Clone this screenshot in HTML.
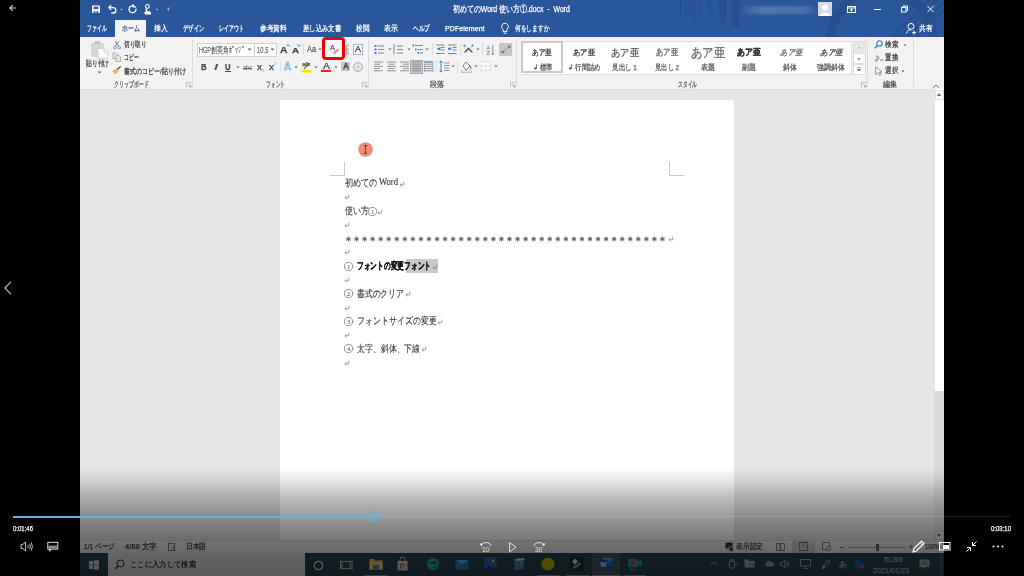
<!DOCTYPE html>
<html><head><meta charset="utf-8">
<style>
*{margin:0;padding:0;box-sizing:border-box}
html,body{width:1024px;height:576px;overflow:hidden;background:#000}
body{position:relative;font-family:"Liberation Sans",sans-serif;color:#444}
.a{position:absolute}
.t{position:absolute;white-space:nowrap;transform-origin:0 50%;-webkit-text-stroke:0.25px currentColor}
svg{overflow:visible}
</style></head>
<body>
<div class="a" style="left:80px;top:0px;width:864px;height:576px;background:#e6e6e6;"></div>
<div class="a" style="left:80px;top:0px;width:864px;height:37px;background:#29579a;"></div>
<div class="a" style="left:80px;top:37px;width:864px;height:52px;background:#f3f3f3;"></div>
<div class="a" style="left:80px;top:89px;width:864px;height:1px;background:#e0e0e0;"></div>
<div class="a" style="left:280px;top:100px;width:454px;height:440px;background:#fff;"></div>
<div class="a" style="left:934px;top:89px;width:10px;height:302px;background:#fff;border-left:1px solid #e9e9e9"></div>
<div class="a" style="left:934px;top:391px;width:10px;height:149px;background:#dadada;"></div>
<svg class="a" style="left:80px;top:0px;overflow:hidden" width="864" height="37" viewBox="0 0 864 37">
<g stroke="#25508d" fill="none">
 <path d="M601 0V15M606 0V18.5M610.5 0V14M614 0V23.5M619 0V17" stroke-width="1.3"/>
 <path d="M627.5 0L632.5 12.5" stroke-width="2.2"/>
 <path d="M639 0H646V24L639 21Z" fill="#25508c" stroke="none"/>
 <path d="M652 0H659V27.5L652 26Z" fill="#25508c" stroke="none"/>
 <circle cx="802" cy="42" r="52" stroke-width="9"/>
 <path d="M812 37L852 -3M820 37L860 -3M828 37L868 -3M836 37L876 -3" stroke-width="2"/>
</g></svg>
<svg class="a" style="left:90px;top:4px;" width="90" height="11" viewBox="0 0 90 11">
<path d="M2 1.5H9.2L10 2.3V8.8H2Z" fill="#fff"/>
<rect x="3.6" y="2.6" width="4.8" height="2.6" fill="#29579a"/>
<rect x="3.8" y="7" width="1.6" height="1.8" fill="#29579a"/><rect x="6.4" y="7" width="1.6" height="1.8" fill="#29579a"/>
<g fill="none" stroke="#fff" stroke-width="1.3">
 <path d="M19.2 3.6H23.2A2.7 2.7 0 0 1 23.2 9H21.2"/>
 <path d="M21.2 1.3L18.8 3.6L21.2 5.9"/>
 <path d="M46 4.6A3.5 3.5 0 1 1 43.6 1.9"/>
 <path d="M43.4 0.2V2.8H46.2"/>
</g>
<circle cx="57.4" cy="2.4" r="1.9" fill="none" stroke="#fff" stroke-width="1.1"/>
<path d="M55.6 4.6H57.2V7.2H59.2Q61 7.2 61 9V10.6H55.2L54 8.4L55.6 8Z" fill="#fff"/>
<g fill="#fff"><path d="M30.4 5H32.6L31.5 6.2Z"/><path d="M66 5H68.2L67.1 6.2Z"/><path d="M77.4 5.6H79.6L78.5 6.8Z"/><rect x="77.4" y="3.8" width="2.2" height="0.7"/></g>
</svg>
<div class="t" id="t0" style="left:453px;top:5.00px;font-size:9px;height:9px;line-height:9px;color:#fff;font-weight:normal;font-family:'Liberation Sans',sans-serif;transform:scaleX(0.7712);">初めてのWord 使い方①.docx&nbsp;&nbsp;-&nbsp;&nbsp;Word</div>
<div class="a" style="left:742px;top:6px;width:74px;height:8px;background:linear-gradient(to right,rgba(255,255,255,0.04),rgba(255,255,255,0.2) 25%,rgba(255,255,255,0.16) 85%,rgba(255,255,255,0.04));filter:blur(1.2px)"></div>
<div class="a" style="left:818px;top:2px;width:14px;height:14px;background:#d9d9d9;"></div>
<svg class="a" style="left:818px;top:2px;" width="14" height="14" viewBox="0 0 14 14"><circle cx="7" cy="5.4" r="2.9" fill="#fff"/><path d="M1.8 14C2.2 9.6 11.8 9.6 12.2 14Z" fill="#fff"/></svg>
<svg class="a" style="left:845px;top:3px;" width="95" height="12" viewBox="0 0 95 12">
<g fill="none" stroke="#fff" stroke-width="1">
 <rect x="2.5" y="3.5" width="8" height="6"/><path d="M2.5 5H10.5M6.5 6V8.5M5 7.3L6.5 6L8 7.3"/>
 <path d="M29 6.5H36"/>
 <rect x="56.5" y="4.5" width="4.5" height="4.5"/><path d="M58 4.5V3H62.5V7.5H61"/>
 <path d="M82.5 3L88.5 9M88.5 3L82.5 9"/>
</g></svg>
<div class="a" style="left:115px;top:20px;width:31px;height:17px;background:#f3f3f3;"></div>
<div class="t" id="t1" style="left:87px;top:24.50px;font-size:8px;height:8px;line-height:8px;color:#fff;font-weight:normal;font-family:'Liberation Sans',sans-serif;transform:scaleX(0.6094);">ファイル</div>
<div class="t" id="t2" style="left:121.5px;top:24.50px;font-size:8px;height:8px;line-height:8px;color:#2b579a;font-weight:normal;font-family:'Liberation Sans',sans-serif;transform:scaleX(0.7292);">ホーム</div>
<div class="t" id="t3" style="left:154px;top:24.50px;font-size:8px;height:8px;line-height:8px;color:#fff;font-weight:normal;font-family:'Liberation Sans',sans-serif;transform:scaleX(0.8438);">挿入</div>
<div class="t" id="t4" style="left:182.5px;top:24.50px;font-size:8px;height:8px;line-height:8px;color:#fff;font-weight:normal;font-family:'Liberation Sans',sans-serif;transform:scaleX(0.6719);">デザイン</div>
<div class="t" id="t5" style="left:218.7px;top:24.50px;font-size:8px;height:8px;line-height:8px;color:#fff;font-weight:normal;font-family:'Liberation Sans',sans-serif;transform:scaleX(0.6400);">レイアウト</div>
<div class="t" id="t6" style="left:260.2px;top:24.50px;font-size:8px;height:8px;line-height:8px;color:#fff;font-weight:normal;font-family:'Liberation Sans',sans-serif;transform:scaleX(0.8375);">参考資料</div>
<div class="t" id="t7" style="left:302.7px;top:24.50px;font-size:8px;height:8px;line-height:8px;color:#fff;font-weight:normal;font-family:'Liberation Sans',sans-serif;transform:scaleX(0.7896);">差し込み文書</div>
<div class="t" id="t8" style="left:356px;top:24.50px;font-size:8px;height:8px;line-height:8px;color:#fff;font-weight:normal;font-family:'Liberation Sans',sans-serif;transform:scaleX(0.8125);">校閲</div>
<div class="t" id="t9" style="left:384.4px;top:24.50px;font-size:8px;height:8px;line-height:8px;color:#fff;font-weight:normal;font-family:'Liberation Sans',sans-serif;transform:scaleX(0.8500);">表示</div>
<div class="t" id="t10" style="left:413.4px;top:24.50px;font-size:8px;height:8px;line-height:8px;color:#fff;font-weight:normal;font-family:'Liberation Sans',sans-serif;transform:scaleX(0.7042);">ヘルプ</div>
<div class="t" id="t11" style="left:445px;top:24.50px;font-size:8px;height:8px;line-height:8px;color:#fff;font-weight:normal;font-family:'Liberation Sans',sans-serif;transform:scaleX(0.8905);">PDFelement</div>
<svg class="a" style="left:500px;top:22px;" width="10" height="13" viewBox="0 0 10 13"><path d="M5 1.2A3.4 3.4 0 0 0 3.1 7.4V9.6H6.9V7.4A3.4 3.4 0 0 0 5 1.2ZM3.6 11.2H6.4" fill="none" stroke="#fff" stroke-width="1"/></svg>
<div class="t" id="t12" style="left:515.4px;top:24.50px;font-size:8px;height:8px;line-height:8px;color:#fff;font-weight:normal;font-family:'Liberation Sans',sans-serif;transform:scaleX(0.7146);">何をしますか</div>
<svg class="a" style="left:905px;top:22px;" width="13" height="13" viewBox="0 0 13 13"><circle cx="6" cy="4.4" r="3" fill="none" stroke="#fff" stroke-width="1"/><path d="M1.4 11.6C2 8.8 3.6 7.6 6 7.6M9 8.6V12.6M7 10.6H11" fill="none" stroke="#fff" stroke-width="1"/></svg>
<div class="t" id="t13" style="left:919px;top:24.50px;font-size:8px;height:8px;line-height:8px;color:#fff;font-weight:normal;font-family:'Liberation Sans',sans-serif;transform:scaleX(0.8438);">共有</div>
<div class="a" style="left:192px;top:39px;width:1px;height:48px;background:#dcdcdc;"></div>
<div class="a" style="left:368px;top:39px;width:1px;height:48px;background:#dcdcdc;"></div>
<div class="a" style="left:516px;top:39px;width:1px;height:48px;background:#dcdcdc;"></div>
<div class="a" style="left:867px;top:39px;width:1px;height:48px;background:#dcdcdc;"></div>
<div class="a" style="left:913px;top:39px;width:1px;height:48px;background:#dcdcdc;"></div>
<div class="t" id="t14" style="left:114px;top:81.20px;font-size:8px;height:8px;line-height:8px;color:#555;font-weight:normal;font-family:'Liberation Sans',sans-serif;transform:scaleX(0.6161);">クリップボード</div>
<div class="t" id="t15" style="left:266px;top:81.20px;font-size:8px;height:8px;line-height:8px;color:#555;font-weight:normal;font-family:'Liberation Sans',sans-serif;transform:scaleX(0.5938);">フォント</div>
<div class="t" id="t16" style="left:430px;top:81.20px;font-size:8px;height:8px;line-height:8px;color:#555;font-weight:normal;font-family:'Liberation Sans',sans-serif;transform:scaleX(0.8750);">段落</div>
<div class="t" id="t17" style="left:678px;top:81.20px;font-size:8px;height:8px;line-height:8px;color:#555;font-weight:normal;font-family:'Liberation Sans',sans-serif;transform:scaleX(0.5938);">スタイル</div>
<div class="t" id="t18" style="left:883px;top:81.20px;font-size:8px;height:8px;line-height:8px;color:#555;font-weight:normal;font-family:'Liberation Sans',sans-serif;transform:scaleX(0.8750);">編集</div>
<svg class="a" style="left:186px;top:82px;" width="6" height="6" viewBox="0 0 6 6"><path d="M0.5 5.5V0.5H5.5" fill="none" stroke="#aaa" stroke-width="0.7"/><path d="M2.2 2.2L5 5M5 3.2V5H3.2" fill="none" stroke="#888" stroke-width="0.7"/></svg>
<svg class="a" style="left:362px;top:82px;" width="6" height="6" viewBox="0 0 6 6"><path d="M0.5 5.5V0.5H5.5" fill="none" stroke="#aaa" stroke-width="0.7"/><path d="M2.2 2.2L5 5M5 3.2V5H3.2" fill="none" stroke="#888" stroke-width="0.7"/></svg>
<svg class="a" style="left:510px;top:82px;" width="6" height="6" viewBox="0 0 6 6"><path d="M0.5 5.5V0.5H5.5" fill="none" stroke="#aaa" stroke-width="0.7"/><path d="M2.2 2.2L5 5M5 3.2V5H3.2" fill="none" stroke="#888" stroke-width="0.7"/></svg>
<svg class="a" style="left:861px;top:82px;" width="6" height="6" viewBox="0 0 6 6"><path d="M0.5 5.5V0.5H5.5" fill="none" stroke="#aaa" stroke-width="0.7"/><path d="M2.2 2.2L5 5M5 3.2V5H3.2" fill="none" stroke="#888" stroke-width="0.7"/></svg>
<svg class="a" style="left:90px;top:40px;" width="19" height="19" viewBox="0 0 19 19">
<rect x="1" y="3" width="13" height="14" rx="1" fill="#d6d6d6"/>
<rect x="4.5" y="1" width="6" height="3.5" rx="1" fill="#c3c3c3"/>
<path d="M8 8.5H14L17.5 12V18.5H8Z" fill="#fdfdfd" stroke="#c8c8c8" stroke-width="0.8"/>
<path d="M14 8.5V12H17.5" fill="none" stroke="#c8c8c8" stroke-width="0.8"/></svg>
<div class="t" id="t19" style="left:86px;top:60.00px;font-size:8px;height:8px;line-height:8px;color:#3c3c3c;font-weight:normal;font-family:'Liberation Sans',sans-serif;transform:scaleX(0.7188);">貼り付け</div>
<svg class="a" style="left:97px;top:71px;" width="5" height="3" viewBox="0 0 5 3"><path d="M0.5 0.5H4.5L2.5 2.5Z" fill="#666"/></svg>
<svg class="a" style="left:112px;top:40px;" width="10" height="10" viewBox="0 0 10 10">
<path d="M3 1L6.8 6.2M7 1L3.2 6.2" stroke="#666" stroke-width="0.8" fill="none"/>
<circle cx="2.8" cy="7.6" r="1.3" fill="none" stroke="#3a7fc9" stroke-width="0.8"/>
<circle cx="7.2" cy="7.6" r="1.3" fill="none" stroke="#3a7fc9" stroke-width="0.8"/></svg>
<div class="t" id="t20" style="left:123.5px;top:41.00px;font-size:8px;height:8px;line-height:8px;color:#3c3c3c;font-weight:normal;font-family:'Liberation Sans',sans-serif;transform:scaleX(0.7031);">切り取り</div>
<svg class="a" style="left:112px;top:52px;" width="10" height="10" viewBox="0 0 10 10">
<path d="M1 1H4.5L5.8 2.3V6.5H1Z" fill="#fff" stroke="#888" stroke-width="0.7"/>
<path d="M1.8 2.8H4M1.8 4.2H4.6" stroke="#999" stroke-width="0.5"/>
<path d="M3.8 3.8H7.3L8.6 5.1V9.4H3.8Z" fill="#fff" stroke="#888" stroke-width="0.7"/>
<path d="M4.6 6H7.6M4.6 7.4H7.6" stroke="#999" stroke-width="0.5"/></svg>
<div class="t" id="t21" style="left:123.5px;top:54.00px;font-size:8px;height:8px;line-height:8px;color:#3c3c3c;font-weight:normal;font-family:'Liberation Sans',sans-serif;transform:scaleX(0.6042);">コピー</div>
<svg class="a" style="left:112px;top:66px;" width="10" height="9" viewBox="0 0 10 9">
<path d="M0.5 5L4 2.5L6.5 5.5L3 8.5Z" fill="#f0b44c"/>
<path d="M5 3.5L8.8 0.5" stroke="#444" stroke-width="1.1"/></svg>
<div class="t" id="t22" style="left:123.5px;top:68.00px;font-size:8px;height:8px;line-height:8px;color:#3c3c3c;font-weight:normal;font-family:'Liberation Sans',sans-serif;transform:scaleX(0.7479);">書式のコピー/貼り付け</div>
<div class="a" style="left:197px;top:42.5px;width:58px;height:14px;background:#fff;border:1px solid #d2d2d2"></div>
<div class="a" style="left:254px;top:42.5px;width:23px;height:14px;background:#fff;border:1px solid #d2d2d2"></div>
<div class="t" id="t23" style="left:199px;top:45.75px;font-size:8.5px;height:8.5px;line-height:8.5px;color:#555;font-weight:normal;font-family:'Liberation Sans',sans-serif;transform:scaleX(0.6532);-webkit-text-stroke:0.1px currentColor">HGP創英角ﾎﾟｯﾌﾟ</div>
<svg class="a" style="left:247px;top:48px;" width="5" height="3" viewBox="0 0 5 3"><path d="M0.5 0.5H4.5L2.5 2.5Z" fill="#555"/></svg>
<div class="t" id="t24" style="left:256.5px;top:45.75px;font-size:8.5px;height:8.5px;line-height:8.5px;color:#555;font-weight:normal;font-family:'Liberation Sans',sans-serif;transform:scaleX(0.6950);-webkit-text-stroke:0.1px currentColor">10.5</div>
<svg class="a" style="left:270px;top:48px;" width="5" height="3" viewBox="0 0 5 3"><path d="M0.5 0.5H4.5L2.5 2.5Z" fill="#555"/></svg>
<div class="t" id="t25" style="left:280px;top:45.25px;font-size:9.5px;height:9.5px;line-height:9.5px;color:#444;font-weight:bold;font-family:'Liberation Sans',sans-serif;transform:scaleX(1.0909);">A</div>
<svg class="a" style="left:286px;top:44px;" width="4" height="3" viewBox="0 0 4 3"><path d="M0.3 2.5L2 0.5L3.7 2.5" fill="none" stroke="#2b79d0" stroke-width="0.9"/></svg>
<div class="t" id="t26" style="left:292px;top:47.00px;font-size:8px;height:8px;line-height:8px;color:#444;font-weight:bold;font-family:'Liberation Sans',sans-serif;transform:scaleX(1.2108);">A</div>
<svg class="a" style="left:297px;top:44px;" width="4" height="3" viewBox="0 0 4 3"><path d="M0.3 0.5L2 2.5L3.7 0.5" fill="none" stroke="#2b79d0" stroke-width="0.9"/></svg>
<div class="a" style="left:303px;top:44px;width:1px;height:11px;background:#dedede;"></div>
<div class="t" id="t27" style="left:307px;top:45.00px;font-size:9px;height:9px;line-height:9px;color:#555;font-weight:normal;font-family:'Liberation Sans',sans-serif;transform:scaleX(0.8170);">Aa</div>
<svg class="a" style="left:318px;top:48px;" width="4" height="3" viewBox="0 0 4 3"><path d="M0.3 0.5H3.7L2 2.3Z" fill="#666"/></svg>
<div class="a" style="left:322px;top:36.5px;width:22.5px;height:23px;background:#fff;border:3.2px solid #f40000;border-radius:4px"></div>
<div class="t" id="t28" style="left:329.5px;top:44.75px;font-size:6.5px;height:6.5px;line-height:6.5px;color:#555;font-weight:normal;font-family:'Liberation Sans',sans-serif;transform:scaleX(1.1511);">A</div>
<svg class="a" style="left:331px;top:47px;" width="8" height="7" viewBox="0 0 8 7"><path d="M2 6L6.5 1.5L8 3L3.5 7.5Z" fill="#e7848f"/></svg>
<svg class="a" style="left:345px;top:44px;" width="4" height="12" viewBox="0 0 4 12"><path d="M3.5 0.5L0.8 3.5" stroke="#555" stroke-width="0.9"/><rect x="0.5" y="4" width="3" height="7" fill="#bdbdbd"/></svg>
<div class="a" style="left:353px;top:44px;width:10px;height:11px;background:#fff;border:1px solid #9fb8d8"></div>
<div class="t" id="t29" style="left:355px;top:45.00px;font-size:9px;height:9px;line-height:9px;color:#333;font-weight:normal;font-family:'Liberation Sans',sans-serif;transform:scaleX(0.9974);">A</div>
<div class="t" id="t30" style="left:201px;top:62.75px;font-size:8.5px;height:8.5px;line-height:8.5px;color:#444;font-weight:bold;font-family:'Liberation Sans',sans-serif;transform:scaleX(0.8957);">B</div>
<div class="t" id="t31" style="left:213.5px;top:62.50px;font-size:9px;height:9px;line-height:9px;color:#555;font-weight:bold;font-family:'Liberation Sans',sans-serif;transform:scaleX(1.5901);font-style:italic;-webkit-text-stroke:0">I</div>
<div class="t" id="t32" style="left:225px;top:62.75px;font-size:8.5px;height:8.5px;line-height:8.5px;color:#444;font-weight:bold;font-family:'Liberation Sans',sans-serif;transform:scaleX(0.8957);">U</div>
<div class="a" style="left:225px;top:71px;width:6px;height:1px;background:#444;"></div>
<svg class="a" style="left:236px;top:66px;" width="4" height="3" viewBox="0 0 4 3"><path d="M0.3 0.5H3.7L2 2.3Z" fill="#666"/></svg>
<div class="t" id="t33" style="left:243px;top:64.00px;font-size:7px;height:7px;line-height:7px;color:#666;font-weight:normal;font-family:'Liberation Sans',sans-serif;transform:scaleX(0.7967);text-decoration:line-through;-webkit-text-stroke:0">abc</div>
<div class="t" id="t34" style="left:257px;top:62.50px;font-size:9px;height:9px;line-height:9px;color:#444;font-weight:normal;font-family:'Liberation Sans',sans-serif;transform:scaleX(1.1111);">x</div>
<div class="t" id="t35" style="left:262px;top:68.50px;font-size:4px;height:4px;line-height:4px;color:#6fa8dc;font-weight:normal;font-family:'Liberation Sans',sans-serif;transform:scaleX(1.1189);-webkit-text-stroke:0">2</div>
<div class="t" id="t36" style="left:269px;top:62.50px;font-size:9px;height:9px;line-height:9px;color:#444;font-weight:normal;font-family:'Liberation Sans',sans-serif;transform:scaleX(1.1111);">x</div>
<div class="t" id="t37" style="left:274px;top:61.50px;font-size:4px;height:4px;line-height:4px;color:#6fa8dc;font-weight:normal;font-family:'Liberation Sans',sans-serif;transform:scaleX(1.1189);-webkit-text-stroke:0">2</div>
<div class="a" style="left:280px;top:61px;width:1px;height:12px;background:#dedede;"></div>
<div class="t" id="t38" style="left:284px;top:62.00px;font-size:10px;height:10px;line-height:10px;color:#9cc3ea;font-weight:bold;font-family:'Liberation Sans',sans-serif;transform:scaleX(0.9676);-webkit-text-stroke:0.6px #5b9bd5;color:#dbe9f7">A</div>
<svg class="a" style="left:294px;top:66px;" width="4" height="3" viewBox="0 0 4 3"><path d="M0.3 0.5H3.7L2 2.3Z" fill="#666"/></svg>
<div class="t" id="t39" style="left:302px;top:61.00px;font-size:6px;height:6px;line-height:6px;color:#555;font-weight:normal;font-family:'Liberation Sans',sans-serif;transform:scaleX(1.1963);">ab</div>
<svg class="a" style="left:301px;top:62px;" width="11" height="11" viewBox="0 0 11 11"><path d="M3 7L8.5 1" stroke="#444" stroke-width="1.1"/><rect x="0.5" y="8" width="10" height="2.5" fill="#f5e400"/></svg>
<svg class="a" style="left:314px;top:66px;" width="4" height="3" viewBox="0 0 4 3"><path d="M0.3 0.5H3.7L2 2.3Z" fill="#666"/></svg>
<div class="t" id="t40" style="left:322.5px;top:61.75px;font-size:8.5px;height:8.5px;line-height:8.5px;color:#444;font-weight:normal;font-family:'Liberation Sans',sans-serif;transform:scaleX(1.2342);">A</div>
<div class="a" style="left:321px;top:70px;width:10px;height:2.2px;background:#e8230f;"></div>
<svg class="a" style="left:334px;top:66px;" width="4" height="3" viewBox="0 0 4 3"><path d="M0.3 0.5H3.7L2 2.3Z" fill="#666"/></svg>
<div class="a" style="left:341px;top:62px;width:9px;height:9px;background:#c6c6c6;"></div>
<div class="t" id="t41" style="left:342.5px;top:62.25px;font-size:8.5px;height:8.5px;line-height:8.5px;color:#444;font-weight:bold;font-family:'Liberation Sans',sans-serif;transform:scaleX(0.9771);">A</div>
<svg class="a" style="left:353px;top:61.5px;" width="10" height="10" viewBox="0 0 10 10"><circle cx="5" cy="5" r="4.3" fill="none" stroke="#888" stroke-width="0.8"/><path d="M5 2.5V7.5M2.5 5H7.5" stroke="#aaa" stroke-width="0.7"/></svg>
<svg class="a" style="left:374px;top:44px;" width="11" height="11" viewBox="0 0 11 11"><g fill="#3a7fc9"><rect x="0.5" y="1" width="2" height="2"/><rect x="0.5" y="4.5" width="2" height="2"/><rect x="0.5" y="8" width="2" height="2"/></g><g stroke="#777" stroke-width="0.9"><path d="M4 2H10M4 5.5H10M4 9H10"/></g></svg>
<svg class="a" style="left:388px;top:48px;" width="4" height="3" viewBox="0 0 4 3"><path d="M0.3 0.5H3.7L2 2.3Z" fill="#666"/></svg>
<svg class="a" style="left:393px;top:44px;" width="11" height="11" viewBox="0 0 11 11"><path d="M1 0.5V10.5" stroke="#3a7fc9" stroke-width="0.9"/><g stroke="#777" stroke-width="0.9"><path d="M4 2H10M4 5.5H10M4 9H10"/></g></svg>
<svg class="a" style="left:407px;top:48px;" width="4" height="3" viewBox="0 0 4 3"><path d="M0.3 0.5H3.7L2 2.3Z" fill="#666"/></svg>
<svg class="a" style="left:412px;top:44px;" width="12" height="11" viewBox="0 0 12 11"><g fill="#3a7fc9"><rect x="0.5" y="0.5" width="1.5" height="2"/><rect x="3" y="4.5" width="1.5" height="2"/><rect x="5.5" y="8" width="1.5" height="2"/></g><g stroke="#777" stroke-width="0.9"><path d="M3 1.5H11M5.5 5.5H11M8 9H11"/></g></svg>
<svg class="a" style="left:425px;top:48px;" width="4" height="3" viewBox="0 0 4 3"><path d="M0.3 0.5H3.7L2 2.3Z" fill="#666"/></svg>
<div class="a" style="left:432px;top:43px;width:1px;height:12px;background:#dedede;"></div>
<svg class="a" style="left:436px;top:44px;" width="9" height="11" viewBox="0 0 9 11"><g stroke="#777" stroke-width="0.9"><path d="M0 1H8.5M4.5 3.5H8.5M4.5 6H8.5M0 9.5H8.5"/></g><path d="M3.5 3L0.8 4.8L3.5 6.6Z" fill="#3a7fc9"/><rect x="2" y="4" width="2.5" height="1.6" fill="#3a7fc9"/></svg>
<svg class="a" style="left:448px;top:44px;" width="9" height="11" viewBox="0 0 9 11"><g stroke="#777" stroke-width="0.9"><path d="M0 1H8.5M4.5 3.5H8.5M4.5 6H8.5M0 9.5H8.5"/></g><path d="M1 3L3.7 4.8L1 6.6Z" fill="#3a7fc9"/><rect x="0" y="4" width="2.5" height="1.6" fill="#3a7fc9"/></svg>
<div class="a" style="left:460px;top:43px;width:1px;height:12px;background:#dedede;"></div>
<svg class="a" style="left:463px;top:44px;" width="11" height="10" viewBox="0 0 11 10"><path d="M0.8 8.6L5.5 3.2L10.2 8.6H8.2L5.5 5.6L2.8 8.6Z" fill="#555"/><path d="M1.2 1.5L3 3.2M9.8 1.5L8 3.2" stroke="#5b9bd5" stroke-width="1"/><g fill="#3a7fc9"><circle cx="1.4" cy="1.6" r="1"/><circle cx="9.6" cy="1.6" r="1"/></g></svg>
<svg class="a" style="left:476px;top:48px;" width="4" height="3" viewBox="0 0 4 3"><path d="M0.3 0.5H3.7L2 2.3Z" fill="#666"/></svg>
<div class="a" style="left:482px;top:43px;width:1px;height:12px;background:#dedede;"></div>
<svg class="a" style="left:486px;top:44px;" width="9" height="12" viewBox="0 0 9 12"><text x="0.3" y="5.5" font-size="5.5" font-family="Liberation Sans" font-weight="bold" fill="#5b9bd5">A</text><text x="0.5" y="10.8" font-size="5.5" font-family="Liberation Sans" font-weight="bold" fill="#9b6fc0">Z</text><path d="M6.8 1V10.5M5.5 9.2L6.8 10.8L8.1 9.2" fill="none" stroke="#666" stroke-width="0.7"/></svg>
<div class="a" style="left:499px;top:43px;width:13px;height:13px;background:#c6c6c6;"></div>
<svg class="a" style="left:501px;top:45px;" width="10" height="9" viewBox="0 0 10 9"><path d="M1 7.5L4 4.5M6 3.5L9 1" stroke="#555" stroke-width="0.9"/><path d="M1 5.5V7.6H3.2M9 3V1H7" fill="none" stroke="#555" stroke-width="0.8"/></svg>
<svg class="a" style="left:374px;top:61px;" width="9" height="12" viewBox="0 0 9 12"><path d="M0 1.0H9 M0 3.2H6 M0 5.4H9 M0 7.6H6 M0 9.8H9" stroke="#888" stroke-width="0.9"/></svg>
<svg class="a" style="left:387px;top:61px;" width="9" height="12" viewBox="0 0 9 12"><path d="M0.0 1.0H9.0 M1.5 3.2H7.5 M0.0 5.4H9.0 M1.5 7.6H7.5 M0.0 9.8H9.0" stroke="#888" stroke-width="0.9"/></svg>
<svg class="a" style="left:400px;top:61px;" width="9" height="12" viewBox="0 0 9 12"><path d="M0 1.0H9 M3 3.2H9 M0 5.4H9 M3 7.6H9 M0 9.8H9" stroke="#888" stroke-width="0.9"/></svg>
<div class="a" style="left:410px;top:60px;width:13px;height:14px;background:#c6c6c6;border:1px solid #aaa"></div>
<svg class="a" style="left:412px;top:61px;" width="9" height="12" viewBox="0 0 9 12"><path d="M0 1.0H9 M0 3.2H9 M0 5.4H9 M0 7.6H9 M0 9.8H9" stroke="#888" stroke-width="0.9"/></svg>
<svg class="a" style="left:424px;top:61px;" width="10" height="12" viewBox="0 0 10 12"><path d="M0 1.0H9 M0 3.2H9 M0 5.4H9 M0 7.6H9 M0 9.8H9" stroke="#888" stroke-width="0.9"/><path d="M1.5 1H7.5M1.5 1L3 0M7.5 1L6 0" stroke="#3a7fc9" stroke-width="0.8"/><path d="M0.4 0V11M9 0V11" stroke="#6a9fd9" stroke-width="0.6"/></svg>
<div class="a" style="left:436px;top:60px;width:1px;height:13px;background:#dedede;"></div>
<svg class="a" style="left:439px;top:60px;" width="11" height="13" viewBox="0 0 11 13"><path d="M2 1V12M0.5 2.5L2 0.8L3.5 2.5M0.5 10.5L2 12.2L3.5 10.5" fill="none" stroke="#3a7fc9" stroke-width="1"/><g stroke="#888" stroke-width="0.9"><path d="M5 3H10.5M5 5.5H10.5M5 8H10.5M5 10.5H10.5"/></g></svg>
<svg class="a" style="left:451px;top:65px;" width="4" height="3" viewBox="0 0 4 3"><path d="M0.3 0.5H3.7L2 2.3Z" fill="#666"/></svg>
<div class="a" style="left:457px;top:60px;width:1px;height:13px;background:#dedede;"></div>
<svg class="a" style="left:461px;top:60px;" width="11" height="13" viewBox="0 0 11 13"><path d="M2 6L5 2L9 6L5 10Z" fill="#fff" stroke="#666" stroke-width="0.9"/><path d="M9 6Q10.5 8 9.5 9" stroke="#3a7fc9" stroke-width="1.2" fill="none"/><rect x="0.5" y="11" width="10" height="1.5" fill="#fff" stroke="#888" stroke-width="0.5"/></svg>
<svg class="a" style="left:474px;top:65px;" width="4" height="3" viewBox="0 0 4 3"><path d="M0.3 0.5H3.7L2 2.3Z" fill="#666"/></svg>
<svg class="a" style="left:481px;top:61px;" width="10" height="11" viewBox="0 0 10 11"><rect x="0.5" y="0.5" width="9" height="9" fill="#fff" stroke="#bbb" stroke-width="0.8" stroke-dasharray="1 1"/><path d="M5 0.5V9.5M0.5 5H9.5" stroke="#bbb" stroke-width="0.8" stroke-dasharray="1 1"/></svg>
<svg class="a" style="left:494px;top:65px;" width="4" height="3" viewBox="0 0 4 3"><path d="M0.3 0.5H3.7L2 2.3Z" fill="#666"/></svg>
<div class="a" style="left:520.5px;top:40.5px;width:331px;height:34px;background:#fff;border:1px solid #e0e0e0"></div>
<div class="a" style="left:521px;top:41px;width:42px;height:32px;background:transparent;border:2px solid #c8c8c8"></div>
<div class="t" id="t42" style="left:532px;top:48.50px;font-size:8px;height:8px;line-height:8px;color:#333;font-weight:normal;font-family:'Liberation Serif',serif;transform:scaleX(0.8333);">あア亜</div>
<div class="t" id="t43" style="left:532.5px;top:63.50px;font-size:8px;height:8px;line-height:8px;color:#555;font-weight:normal;font-family:'Liberation Sans',sans-serif;transform:scaleX(0.7728);">↲ 標準</div>
<div class="t" id="t44" style="left:572.5px;top:48.50px;font-size:8px;height:8px;line-height:8px;color:#333;font-weight:normal;font-family:'Liberation Serif',serif;transform:scaleX(0.9167);">あア亜</div>
<div class="t" id="t45" style="left:567.5px;top:63.50px;font-size:8px;height:8px;line-height:8px;color:#555;font-weight:normal;font-family:'Liberation Sans',sans-serif;transform:scaleX(0.7882);">↲ 行間詰め</div>
<div class="t" id="t46" style="left:611px;top:47.50px;font-size:10px;height:10px;line-height:10px;color:#555;font-weight:normal;font-family:'Liberation Sans',sans-serif;transform:scaleX(0.9333);">あア亜</div>
<div class="t" id="t47" style="left:612px;top:63.50px;font-size:8px;height:8px;line-height:8px;color:#555;font-weight:normal;font-family:'Liberation Sans',sans-serif;transform:scaleX(0.8151);">見出し 1</div>
<div class="t" id="t48" style="left:655.5px;top:48.25px;font-size:8.5px;height:8.5px;line-height:8.5px;color:#555;font-weight:normal;font-family:'Liberation Sans',sans-serif;transform:scaleX(0.8148);">あア亜</div>
<div class="t" id="t49" style="left:654.5px;top:63.50px;font-size:8px;height:8px;line-height:8px;color:#555;font-weight:normal;font-family:'Liberation Sans',sans-serif;transform:scaleX(0.7825);">見出し 2</div>
<div class="t" id="t50" style="left:691px;top:46.00px;font-size:13px;height:13px;line-height:13px;color:#666;font-weight:normal;font-family:'Liberation Sans',sans-serif;transform:scaleX(0.8718);">あア亜</div>
<div class="t" id="t51" style="left:700.5px;top:63.50px;font-size:8px;height:8px;line-height:8px;color:#555;font-weight:normal;font-family:'Liberation Sans',sans-serif;transform:scaleX(0.8750);">表題</div>
<div class="t" id="t52" style="left:737px;top:48.00px;font-size:9px;height:9px;line-height:9px;color:#333;font-weight:bold;font-family:'Liberation Serif',serif;transform:scaleX(0.8889);">あア亜</div>
<div class="t" id="t53" style="left:742px;top:63.50px;font-size:8px;height:8px;line-height:8px;color:#555;font-weight:normal;font-family:'Liberation Sans',sans-serif;transform:scaleX(0.8750);">副題</div>
<div class="t" id="t54" style="left:779.5px;top:48.50px;font-size:8px;height:8px;line-height:8px;color:#666;font-weight:normal;font-family:'Liberation Sans',sans-serif;transform:scaleX(0.9375);font-style:italic">あア亜</div>
<div class="t" id="t55" style="left:783px;top:63.50px;font-size:8px;height:8px;line-height:8px;color:#555;font-weight:normal;font-family:'Liberation Sans',sans-serif;transform:scaleX(0.8750);">斜体</div>
<div class="t" id="t56" style="left:820px;top:48.50px;font-size:8px;height:8px;line-height:8px;color:#444;font-weight:normal;font-family:'Liberation Sans',sans-serif;transform:scaleX(0.9583);font-style:italic">あア亜</div>
<div class="t" id="t57" style="left:817px;top:63.50px;font-size:8px;height:8px;line-height:8px;color:#555;font-weight:normal;font-family:'Liberation Sans',sans-serif;transform:scaleX(0.8750);">強調斜体</div>
<div class="a" style="left:852.5px;top:40.5px;width:13px;height:13px;background:#e9e9e9;border:1px solid #ddd"></div>
<div class="a" style="left:852.5px;top:53px;width:13px;height:11px;background:#fff;border:1px solid #ddd"></div>
<div class="a" style="left:852.5px;top:63.5px;width:13px;height:11px;background:#fff;border:1px solid #ddd"></div>
<svg class="a" style="left:857px;top:46px;" width="4" height="3" viewBox="0 0 4 3"><path d="M0.3 2.3H3.7L2 0.5Z" fill="#bbb"/></svg>
<svg class="a" style="left:857px;top:58px;" width="4" height="3" viewBox="0 0 4 3"><path d="M0.3 0.5H3.7L2 2.3Z" fill="#555"/></svg>
<svg class="a" style="left:857px;top:67px;" width="4" height="5" viewBox="0 0 4 5"><path d="M0.3 0.5H3.7M0.3 2.2H3.7L2 4Z" fill="#555" stroke="#555" stroke-width="0.5"/></svg>
<svg class="a" style="left:874px;top:40px;" width="9" height="9" viewBox="0 0 9 9"><circle cx="5.5" cy="3.5" r="2.7" fill="none" stroke="#3a7fc9" stroke-width="1.1"/><path d="M3.5 5.5L0.8 8.2" stroke="#3a7fc9" stroke-width="1.4"/></svg>
<div class="t" id="t58" style="left:885px;top:41.00px;font-size:8px;height:8px;line-height:8px;color:#3c3c3c;font-weight:normal;font-family:'Liberation Sans',sans-serif;transform:scaleX(0.8125);">検索</div>
<svg class="a" style="left:903px;top:44px;" width="4" height="3" viewBox="0 0 4 3"><path d="M0.3 0.5H3.7L2 2.3Z" fill="#666"/></svg>
<svg class="a" style="left:874px;top:53px;" width="10" height="10" viewBox="0 0 10 10"><text x="2" y="6" font-size="6" font-family="Liberation Sans" fill="#8e5ca8">b</text><path d="M0.5 7H3M6 7H9.5" stroke="#3a7fc9" stroke-width="0.9"/><path d="M2 9L5 5" stroke="#555" stroke-width="0.7"/></svg>
<div class="t" id="t59" style="left:885px;top:54.00px;font-size:8px;height:8px;line-height:8px;color:#3c3c3c;font-weight:normal;font-family:'Liberation Sans',sans-serif;transform:scaleX(0.8125);">置換</div>
<svg class="a" style="left:875px;top:66px;" width="8" height="10" viewBox="0 0 8 10"><path d="M0.7 0.7V8.5L2.8 6.8L4.5 9.5L5.8 8.8L4.2 6.2H7Z" fill="#fff" stroke="#777" stroke-width="0.8"/></svg>
<div class="t" id="t60" style="left:885px;top:67.00px;font-size:8px;height:8px;line-height:8px;color:#3c3c3c;font-weight:normal;font-family:'Liberation Sans',sans-serif;transform:scaleX(0.8125);">選択</div>
<svg class="a" style="left:901px;top:70px;" width="4" height="3" viewBox="0 0 4 3"><path d="M0.3 0.5H3.7L2 2.3Z" fill="#666"/></svg>
<svg class="a" style="left:932px;top:84px;" width="8" height="5" viewBox="0 0 8 5"><path d="M0.8 4L4 1L7.2 4" fill="none" stroke="#666" stroke-width="0.9"/></svg>
<svg class="a" style="left:358.0px;top:141.5px;" width="15" height="15" viewBox="0 0 15 15"><circle cx="7.5" cy="7.5" r="7.3" fill="#f28a7c"/><path d="M5.8 3.6H9.2M7.5 3.6V11.4M5.8 11.4H9.2" stroke="#333" stroke-width="0.75" fill="none"/></svg>
<svg class="a" style="left:330px;top:160px;" width="16" height="17" viewBox="0 0 16 17"><path d="M14.5 2V15.5H0" fill="none" stroke="#c6c6c6" stroke-width="1"/></svg>
<svg class="a" style="left:668px;top:160px;" width="16" height="17" viewBox="0 0 16 17"><path d="M1.5 2V15.5H16" fill="none" stroke="#c6c6c6" stroke-width="1"/></svg>
<div class="t" id="t61" style="left:344.5px;top:178.00px;font-size:10px;height:10px;line-height:10px;color:#333;font-weight:normal;font-family:'Liberation Serif',serif;transform:scaleX(0.8125);-webkit-text-stroke:0.1px currentColor">初めての</div>
<div class="t" id="t62" style="left:379px;top:178.25px;font-size:9.5px;height:9.5px;line-height:9.5px;color:#333;font-weight:normal;font-family:'Liberation Serif',serif;transform:scaleX(0.9102);-webkit-text-stroke:0.1px currentColor">Word</div>
<svg class="a" style="left:398.5px;top:180.5px;" width="6" height="6" viewBox="0 0 6 6"><path d="M4.8 0.5V3.8H1M2.6 2.3L0.9 3.8L2.6 5.3" fill="none" stroke="#8a8a8a" stroke-width="0.8"/></svg>
<svg class="a" style="left:344px;top:194px;" width="6" height="6" viewBox="0 0 6 6"><path d="M4.8 0.5V3.8H1M2.6 2.3L0.9 3.8L2.6 5.3" fill="none" stroke="#8a8a8a" stroke-width="0.8"/></svg>
<div class="t" id="t63" style="left:344.5px;top:206.00px;font-size:10px;height:10px;line-height:10px;color:#333;font-weight:normal;font-family:'Liberation Serif',serif;transform:scaleX(0.8000);-webkit-text-stroke:0.1px currentColor">使い方</div>
<svg class="a" style="left:368px;top:206.5px;" width="9" height="9" viewBox="0 0 9 9"><circle cx="4.5" cy="4.5" r="4.1" fill="none" stroke="#666" stroke-width="0.7"/><text x="4.5" y="6.8" font-size="6.5" text-anchor="middle" font-family="Liberation Serif" fill="#444">1</text></svg>
<svg class="a" style="left:376.5px;top:208.5px;" width="6" height="6" viewBox="0 0 6 6"><path d="M4.8 0.5V3.8H1M2.6 2.3L0.9 3.8L2.6 5.3" fill="none" stroke="#8a8a8a" stroke-width="0.8"/></svg>
<svg class="a" style="left:344px;top:222px;" width="6" height="6" viewBox="0 0 6 6"><path d="M4.8 0.5V3.8H1M2.6 2.3L0.9 3.8L2.6 5.3" fill="none" stroke="#8a8a8a" stroke-width="0.8"/></svg>
<svg class="a" style="left:345.5px;top:235.5px;" width="330" height="6" viewBox="0 0 330 6"><g transform="translate(2.50 3)"><path d="M0 -2.4V2.4M-2.1 -1.2L2.1 1.2M-2.1 1.2L2.1 -1.2" stroke="#666" stroke-width="1.05"/></g><g transform="translate(10.55 3)"><path d="M0 -2.4V2.4M-2.1 -1.2L2.1 1.2M-2.1 1.2L2.1 -1.2" stroke="#666" stroke-width="1.05"/></g><g transform="translate(18.60 3)"><path d="M0 -2.4V2.4M-2.1 -1.2L2.1 1.2M-2.1 1.2L2.1 -1.2" stroke="#666" stroke-width="1.05"/></g><g transform="translate(26.65 3)"><path d="M0 -2.4V2.4M-2.1 -1.2L2.1 1.2M-2.1 1.2L2.1 -1.2" stroke="#666" stroke-width="1.05"/></g><g transform="translate(34.70 3)"><path d="M0 -2.4V2.4M-2.1 -1.2L2.1 1.2M-2.1 1.2L2.1 -1.2" stroke="#666" stroke-width="1.05"/></g><g transform="translate(42.75 3)"><path d="M0 -2.4V2.4M-2.1 -1.2L2.1 1.2M-2.1 1.2L2.1 -1.2" stroke="#666" stroke-width="1.05"/></g><g transform="translate(50.80 3)"><path d="M0 -2.4V2.4M-2.1 -1.2L2.1 1.2M-2.1 1.2L2.1 -1.2" stroke="#666" stroke-width="1.05"/></g><g transform="translate(58.85 3)"><path d="M0 -2.4V2.4M-2.1 -1.2L2.1 1.2M-2.1 1.2L2.1 -1.2" stroke="#666" stroke-width="1.05"/></g><g transform="translate(66.90 3)"><path d="M0 -2.4V2.4M-2.1 -1.2L2.1 1.2M-2.1 1.2L2.1 -1.2" stroke="#666" stroke-width="1.05"/></g><g transform="translate(74.95 3)"><path d="M0 -2.4V2.4M-2.1 -1.2L2.1 1.2M-2.1 1.2L2.1 -1.2" stroke="#666" stroke-width="1.05"/></g><g transform="translate(83.00 3)"><path d="M0 -2.4V2.4M-2.1 -1.2L2.1 1.2M-2.1 1.2L2.1 -1.2" stroke="#666" stroke-width="1.05"/></g><g transform="translate(91.05 3)"><path d="M0 -2.4V2.4M-2.1 -1.2L2.1 1.2M-2.1 1.2L2.1 -1.2" stroke="#666" stroke-width="1.05"/></g><g transform="translate(99.10 3)"><path d="M0 -2.4V2.4M-2.1 -1.2L2.1 1.2M-2.1 1.2L2.1 -1.2" stroke="#666" stroke-width="1.05"/></g><g transform="translate(107.15 3)"><path d="M0 -2.4V2.4M-2.1 -1.2L2.1 1.2M-2.1 1.2L2.1 -1.2" stroke="#666" stroke-width="1.05"/></g><g transform="translate(115.20 3)"><path d="M0 -2.4V2.4M-2.1 -1.2L2.1 1.2M-2.1 1.2L2.1 -1.2" stroke="#666" stroke-width="1.05"/></g><g transform="translate(123.25 3)"><path d="M0 -2.4V2.4M-2.1 -1.2L2.1 1.2M-2.1 1.2L2.1 -1.2" stroke="#666" stroke-width="1.05"/></g><g transform="translate(131.30 3)"><path d="M0 -2.4V2.4M-2.1 -1.2L2.1 1.2M-2.1 1.2L2.1 -1.2" stroke="#666" stroke-width="1.05"/></g><g transform="translate(139.35 3)"><path d="M0 -2.4V2.4M-2.1 -1.2L2.1 1.2M-2.1 1.2L2.1 -1.2" stroke="#666" stroke-width="1.05"/></g><g transform="translate(147.40 3)"><path d="M0 -2.4V2.4M-2.1 -1.2L2.1 1.2M-2.1 1.2L2.1 -1.2" stroke="#666" stroke-width="1.05"/></g><g transform="translate(155.45 3)"><path d="M0 -2.4V2.4M-2.1 -1.2L2.1 1.2M-2.1 1.2L2.1 -1.2" stroke="#666" stroke-width="1.05"/></g><g transform="translate(163.50 3)"><path d="M0 -2.4V2.4M-2.1 -1.2L2.1 1.2M-2.1 1.2L2.1 -1.2" stroke="#666" stroke-width="1.05"/></g><g transform="translate(171.55 3)"><path d="M0 -2.4V2.4M-2.1 -1.2L2.1 1.2M-2.1 1.2L2.1 -1.2" stroke="#666" stroke-width="1.05"/></g><g transform="translate(179.60 3)"><path d="M0 -2.4V2.4M-2.1 -1.2L2.1 1.2M-2.1 1.2L2.1 -1.2" stroke="#666" stroke-width="1.05"/></g><g transform="translate(187.65 3)"><path d="M0 -2.4V2.4M-2.1 -1.2L2.1 1.2M-2.1 1.2L2.1 -1.2" stroke="#666" stroke-width="1.05"/></g><g transform="translate(195.70 3)"><path d="M0 -2.4V2.4M-2.1 -1.2L2.1 1.2M-2.1 1.2L2.1 -1.2" stroke="#666" stroke-width="1.05"/></g><g transform="translate(203.75 3)"><path d="M0 -2.4V2.4M-2.1 -1.2L2.1 1.2M-2.1 1.2L2.1 -1.2" stroke="#666" stroke-width="1.05"/></g><g transform="translate(211.80 3)"><path d="M0 -2.4V2.4M-2.1 -1.2L2.1 1.2M-2.1 1.2L2.1 -1.2" stroke="#666" stroke-width="1.05"/></g><g transform="translate(219.85 3)"><path d="M0 -2.4V2.4M-2.1 -1.2L2.1 1.2M-2.1 1.2L2.1 -1.2" stroke="#666" stroke-width="1.05"/></g><g transform="translate(227.90 3)"><path d="M0 -2.4V2.4M-2.1 -1.2L2.1 1.2M-2.1 1.2L2.1 -1.2" stroke="#666" stroke-width="1.05"/></g><g transform="translate(235.95 3)"><path d="M0 -2.4V2.4M-2.1 -1.2L2.1 1.2M-2.1 1.2L2.1 -1.2" stroke="#666" stroke-width="1.05"/></g><g transform="translate(244.00 3)"><path d="M0 -2.4V2.4M-2.1 -1.2L2.1 1.2M-2.1 1.2L2.1 -1.2" stroke="#666" stroke-width="1.05"/></g><g transform="translate(252.05 3)"><path d="M0 -2.4V2.4M-2.1 -1.2L2.1 1.2M-2.1 1.2L2.1 -1.2" stroke="#666" stroke-width="1.05"/></g><g transform="translate(260.10 3)"><path d="M0 -2.4V2.4M-2.1 -1.2L2.1 1.2M-2.1 1.2L2.1 -1.2" stroke="#666" stroke-width="1.05"/></g><g transform="translate(268.15 3)"><path d="M0 -2.4V2.4M-2.1 -1.2L2.1 1.2M-2.1 1.2L2.1 -1.2" stroke="#666" stroke-width="1.05"/></g><g transform="translate(276.20 3)"><path d="M0 -2.4V2.4M-2.1 -1.2L2.1 1.2M-2.1 1.2L2.1 -1.2" stroke="#666" stroke-width="1.05"/></g><g transform="translate(284.25 3)"><path d="M0 -2.4V2.4M-2.1 -1.2L2.1 1.2M-2.1 1.2L2.1 -1.2" stroke="#666" stroke-width="1.05"/></g><g transform="translate(292.30 3)"><path d="M0 -2.4V2.4M-2.1 -1.2L2.1 1.2M-2.1 1.2L2.1 -1.2" stroke="#666" stroke-width="1.05"/></g><g transform="translate(300.35 3)"><path d="M0 -2.4V2.4M-2.1 -1.2L2.1 1.2M-2.1 1.2L2.1 -1.2" stroke="#666" stroke-width="1.05"/></g><g transform="translate(308.40 3)"><path d="M0 -2.4V2.4M-2.1 -1.2L2.1 1.2M-2.1 1.2L2.1 -1.2" stroke="#666" stroke-width="1.05"/></g><g transform="translate(316.45 3)"><path d="M0 -2.4V2.4M-2.1 -1.2L2.1 1.2M-2.1 1.2L2.1 -1.2" stroke="#666" stroke-width="1.05"/></g></svg>
<svg class="a" style="left:667.5px;top:235.5px;" width="6" height="6" viewBox="0 0 6 6"><path d="M4.8 0.5V3.8H1M2.6 2.3L0.9 3.8L2.6 5.3" fill="none" stroke="#8a8a8a" stroke-width="0.8"/></svg>
<svg class="a" style="left:344px;top:249px;" width="6" height="6" viewBox="0 0 6 6"><path d="M4.8 0.5V3.8H1M2.6 2.3L0.9 3.8L2.6 5.3" fill="none" stroke="#8a8a8a" stroke-width="0.8"/></svg>
<div class="a" style="left:405.5px;top:259px;width:32.5px;height:13.5px;background:#c8c8c8;"></div>
<svg class="a" style="left:343.5px;top:261.5px;" width="9" height="9" viewBox="0 0 9 9"><circle cx="4.5" cy="4.5" r="4.1" fill="none" stroke="#666" stroke-width="0.7"/><text x="4.5" y="6.8" font-size="6.5" text-anchor="middle" font-family="Liberation Serif" fill="#444">1</text></svg>
<div class="t" id="t64" style="left:357px;top:261.00px;font-size:10px;height:10px;line-height:10px;color:#111;font-weight:bold;font-family:'Liberation Sans',sans-serif;transform:scaleX(0.6727);">フォントの変更フォント</div>
<svg class="a" style="left:432px;top:263.5px;" width="6" height="6" viewBox="0 0 6 6"><path d="M4.8 0.5V3.8H1M2.6 2.3L0.9 3.8L2.6 5.3" fill="none" stroke="#8a8a8a" stroke-width="0.8"/></svg>
<svg class="a" style="left:344px;top:277px;" width="6" height="6" viewBox="0 0 6 6"><path d="M4.8 0.5V3.8H1M2.6 2.3L0.9 3.8L2.6 5.3" fill="none" stroke="#8a8a8a" stroke-width="0.8"/></svg>
<svg class="a" style="left:343.5px;top:289.0px;" width="9" height="9" viewBox="0 0 9 9"><circle cx="4.5" cy="4.5" r="4.1" fill="none" stroke="#666" stroke-width="0.7"/><text x="4.5" y="6.8" font-size="6.5" text-anchor="middle" font-family="Liberation Serif" fill="#444">2</text></svg>
<div class="t" id="t65" style="left:357px;top:288.50px;font-size:10px;height:10px;line-height:10px;color:#333;font-weight:normal;font-family:'Liberation Serif',serif;transform:scaleX(0.7833);-webkit-text-stroke:0.1px currentColor">書式のクリア</div>
<svg class="a" style="left:404.5px;top:291px;" width="6" height="6" viewBox="0 0 6 6"><path d="M4.8 0.5V3.8H1M2.6 2.3L0.9 3.8L2.6 5.3" fill="none" stroke="#8a8a8a" stroke-width="0.8"/></svg>
<svg class="a" style="left:344px;top:304.5px;" width="6" height="6" viewBox="0 0 6 6"><path d="M4.8 0.5V3.8H1M2.6 2.3L0.9 3.8L2.6 5.3" fill="none" stroke="#8a8a8a" stroke-width="0.8"/></svg>
<svg class="a" style="left:343.5px;top:316.7px;" width="9" height="9" viewBox="0 0 9 9"><circle cx="4.5" cy="4.5" r="4.1" fill="none" stroke="#666" stroke-width="0.7"/><text x="4.5" y="6.8" font-size="6.5" text-anchor="middle" font-family="Liberation Serif" fill="#444">3</text></svg>
<div class="t" id="t66" style="left:357px;top:316.20px;font-size:10px;height:10px;line-height:10px;color:#333;font-weight:normal;font-family:'Liberation Serif',serif;transform:scaleX(0.7960);-webkit-text-stroke:0.1px currentColor">フォントサイズの変更</div>
<svg class="a" style="left:437px;top:318.7px;" width="6" height="6" viewBox="0 0 6 6"><path d="M4.8 0.5V3.8H1M2.6 2.3L0.9 3.8L2.6 5.3" fill="none" stroke="#8a8a8a" stroke-width="0.8"/></svg>
<svg class="a" style="left:344px;top:331.8px;" width="6" height="6" viewBox="0 0 6 6"><path d="M4.8 0.5V3.8H1M2.6 2.3L0.9 3.8L2.6 5.3" fill="none" stroke="#8a8a8a" stroke-width="0.8"/></svg>
<svg class="a" style="left:343.5px;top:344.1px;" width="9" height="9" viewBox="0 0 9 9"><circle cx="4.5" cy="4.5" r="4.1" fill="none" stroke="#666" stroke-width="0.7"/><text x="4.5" y="6.8" font-size="6.5" text-anchor="middle" font-family="Liberation Serif" fill="#444">4</text></svg>
<div class="t" id="t67" style="left:357px;top:343.60px;font-size:10px;height:10px;line-height:10px;color:#333;font-weight:normal;font-family:'Liberation Serif',serif;transform:scaleX(0.7900);-webkit-text-stroke:0.1px currentColor">太字、斜体、下線</div>
<svg class="a" style="left:421px;top:346px;" width="6" height="6" viewBox="0 0 6 6"><path d="M4.8 0.5V3.8H1M2.6 2.3L0.9 3.8L2.6 5.3" fill="none" stroke="#8a8a8a" stroke-width="0.8"/></svg>
<svg class="a" style="left:344px;top:359.5px;" width="6" height="6" viewBox="0 0 6 6"><path d="M4.8 0.5V3.8H1M2.6 2.3L0.9 3.8L2.6 5.3" fill="none" stroke="#8a8a8a" stroke-width="0.8"/></svg>
<div class="a" style="left:353px;top:265.5px;width:1.2px;height:1.2px;background:#aaa;"></div>
<div class="a" style="left:353px;top:293.0px;width:1.2px;height:1.2px;background:#aaa;"></div>
<div class="a" style="left:353px;top:320.7px;width:1.2px;height:1.2px;background:#aaa;"></div>
<div class="a" style="left:353px;top:348.1px;width:1.2px;height:1.2px;background:#aaa;"></div>
<div class="a" style="left:934.5px;top:90px;width:9.5px;height:9.5px;background:#fff;border:1px solid #e0e0e0"></div>
<svg class="a" style="left:936px;top:92px;" width="6" height="5" viewBox="0 0 6 5"><path d="M0.5 4H5.5L3 1Z" fill="#777"/></svg>
<div class="a" style="left:934.5px;top:530.5px;width:9.5px;height:9.5px;background:#f0f0f0;border:1px solid #d0d0d0"></div>
<svg class="a" style="left:936px;top:533px;" width="6" height="5" viewBox="0 0 6 5"><path d="M0.5 1H5.5L3 4Z" fill="#777"/></svg>
<div class="a" style="left:80px;top:540px;width:864px;height:13px;background:#f3f3f3;border-top:1px solid #dedede"></div>
<div class="t" id="t68" style="left:84px;top:543.00px;font-size:8px;height:8px;line-height:8px;color:#444;font-weight:normal;font-family:'Liberation Sans',sans-serif;transform:scaleX(0.8301);">1/1 ページ</div>
<div class="t" id="t69" style="left:125px;top:543.00px;font-size:8px;height:8px;line-height:8px;color:#444;font-weight:normal;font-family:'Liberation Sans',sans-serif;transform:scaleX(0.9468);">4/88 文字</div>
<svg class="a" style="left:168px;top:543px;" width="8" height="8" viewBox="0 0 8 8"><rect x="0.5" y="0.5" width="6" height="7" fill="none" stroke="#666" stroke-width="0.8"/><path d="M4 4L7.5 7.5M6 3.5L4.5 5" stroke="#666" stroke-width="0.8"/></svg>
<div class="t" id="t70" style="left:186px;top:543.00px;font-size:8px;height:8px;line-height:8px;color:#444;font-weight:normal;font-family:'Liberation Sans',sans-serif;transform:scaleX(0.8333);">日本語</div>
<svg class="a" style="left:725px;top:542px;" width="9" height="10" viewBox="0 0 9 10"><rect x="0.5" y="0.5" width="7" height="6" fill="#333"/><rect x="4" y="5" width="4.5" height="4.5" fill="#444" stroke="#f3f3f3" stroke-width="0.7"/></svg>
<div class="t" id="t71" style="left:736px;top:543.00px;font-size:8px;height:8px;line-height:8px;color:#444;font-weight:normal;font-family:'Liberation Sans',sans-serif;transform:scaleX(0.8438);">表示設定</div>
<svg class="a" style="left:776px;top:542px;" width="9" height="9" viewBox="0 0 9 9"><path d="M0.5 1.5H4V8.5H0.5ZM4.5 1.5H8.5V8.5H4.5Z" fill="none" stroke="#666" stroke-width="0.8"/></svg>
<div class="a" style="left:792px;top:540.5px;width:23px;height:12.5px;background:#d6d6d6;"></div>
<svg class="a" style="left:799px;top:542px;" width="9" height="9" viewBox="0 0 9 9"><rect x="0.5" y="0.5" width="8" height="8" fill="none" stroke="#666" stroke-width="0.8"/><path d="M2 3H7M2 5H7" stroke="#888" stroke-width="0.6"/></svg>
<svg class="a" style="left:822px;top:542px;" width="9" height="9" viewBox="0 0 9 9"><rect x="0.5" y="0.5" width="7" height="7" fill="none" stroke="#666" stroke-width="0.8"/><circle cx="6.5" cy="6.5" r="2" fill="#f3f3f3" stroke="#666" stroke-width="0.8"/></svg>
<div class="a" style="left:840px;top:547px;width:4px;height:1px;background:#777;"></div>
<div class="a" style="left:848px;top:547px;width:57px;height:1px;background:#aaa;"></div>
<div class="a" style="left:876px;top:544px;width:2.5px;height:7px;background:#666;"></div>
<svg class="a" style="left:908px;top:544px;" width="6" height="6" viewBox="0 0 6 6"><path d="M3 0.5V5.5M0.5 3H5.5" stroke="#777" stroke-width="0.9"/></svg>
<div class="t" id="t72" style="left:925px;top:543.00px;font-size:8px;height:8px;line-height:8px;color:#444;font-weight:normal;font-family:'Liberation Sans',sans-serif;transform:scaleX(0.7328);">100%</div>
<div class="a" style="left:80px;top:553px;width:864px;height:23px;background:#284354;"></div>
<svg class="a" style="left:89px;top:560px;" width="10" height="10" viewBox="0 0 10 10"><g fill="#ddd"><path d="M0 1.3L4.2 0.7V4.7H0Z"/><path d="M4.8 0.6L10 0V4.7H4.8Z"/><path d="M0 5.3H4.2V9.3L0 8.7Z"/><path d="M4.8 5.3H10V10L4.8 9.4Z"/></g></svg>
<div class="a" style="left:108px;top:553px;width:197px;height:23px;background:#f0f0f0;"></div>
<svg class="a" style="left:114px;top:559px;" width="11" height="11" viewBox="0 0 11 11"><circle cx="6.5" cy="4.5" r="3.5" fill="none" stroke="#222" stroke-width="1"/><path d="M4 7L0.8 10.2" stroke="#222" stroke-width="1.1"/></svg>
<div class="t" id="t73" style="left:130px;top:561.00px;font-size:8px;height:8px;line-height:8px;color:#333;font-weight:normal;font-family:'Liberation Sans',sans-serif;transform:scaleX(0.9167);">ここに入力して検索</div>
<svg class="a" style="left:313px;top:560px;" width="11" height="11" viewBox="0 0 11 11"><circle cx="5.5" cy="5.5" r="4.2" fill="none" stroke="#eee" stroke-width="1.2"/></svg>
<svg class="a" style="left:340px;top:559px;" width="13" height="12" viewBox="0 0 13 12"><rect x="2" y="2.5" width="8" height="7" fill="none" stroke="#ddd" stroke-width="0.9"/><path d="M0.5 1V11M12 1V11" stroke="#ddd" stroke-width="0.9"/></svg>
<svg class="a" style="left:369px;top:557px;" width="14" height="14" viewBox="0 0 14 14"><path d="M0.5 2H5L6.5 3.5H13.5V12.5H0.5Z" fill="#f4c15a"/><rect x="0.5" y="5" width="13" height="7.5" fill="#ffd97a"/><rect x="4" y="8" width="6" height="4" fill="#2d8ad8"/></svg>
<div class="a" style="left:364px;top:575px;width:24px;height:1px;background:#999;"></div>
<svg class="a" style="left:397px;top:557px;" width="11" height="14" viewBox="0 0 11 14"><path d="M3 4V2.5A2.5 2.5 0 0 1 8 2.5V4" fill="none" stroke="#ddd" stroke-width="1"/><rect x="0.5" y="4" width="10" height="9.5" fill="#ddd"/><rect x="3" y="6.5" width="2.2" height="2.2" fill="#f25022"/><rect x="5.8" y="6.5" width="2.2" height="2.2" fill="#7fba00"/><rect x="3" y="9.3" width="2.2" height="2.2" fill="#00a4ef"/><rect x="5.8" y="9.3" width="2.2" height="2.2" fill="#ffb900"/></svg>
<svg class="a" style="left:426px;top:557px;" width="14" height="14" viewBox="0 0 14 14"><circle cx="7" cy="7" r="6.5" fill="#1a8fd4"/><path d="M2 8.5A5 5 0 0 1 12 6.5Q12 9 9 9H5Q6 11.5 9.5 11.5Q11.5 11.5 12.5 10.5A6.5 6.5 0 0 1 2 8.5Z" fill="#3cc75f"/><path d="M4 8A3.5 3.5 0 0 1 11 7H5" fill="#0f5aa0"/></svg>
<svg class="a" style="left:455px;top:558px;" width="14" height="12" viewBox="0 0 14 12"><rect x="0.5" y="2" width="13" height="9.5" fill="#1a8ad0"/><path d="M0.5 2L7 7L13.5 2" fill="#6ec0f0"/><path d="M0.5 2L7 6.5L13.5 2" fill="none" stroke="#0d5f99" stroke-width="0.6"/></svg>
<svg class="a" style="left:484px;top:557px;" width="13" height="14" viewBox="0 0 13 14"><rect x="0.5" y="0.5" width="12" height="13" fill="#2a6fb8"/><path d="M0.5 13.5L5 8L8 11L10 9L12.5 12V13.5Z" fill="#143d73"/><circle cx="9" cy="4" r="1.3" fill="#ffd36a"/></svg>
<svg class="a" style="left:513px;top:557px;" width="12" height="14" viewBox="0 0 12 14"><path d="M2 2L11 1L10.5 12L1 13Z" fill="#4e8a9e"/><path d="M2 2L11 1L11.5 3L2.5 4Z" fill="#cfe7ee"/></svg>
<svg class="a" style="left:541px;top:557px;" width="14" height="14" viewBox="0 0 14 14"><circle cx="7" cy="7" r="6.6" fill="#c8bb00"/></svg>
<div class="a" style="left:537px;top:575px;width:23px;height:1px;background:#999;"></div>
<svg class="a" style="left:570px;top:557px;" width="13" height="14" viewBox="0 0 13 14"><rect x="0" y="0" width="13" height="14" fill="#1f2a2f"/><path d="M5 1.5L8 4.5L5 7.5L2 4.5Z" fill="#eee"/><path d="M2.5 10L10 5L11 7.5L3.5 12.5Z" fill="#28c5a6"/></svg>
<div class="a" style="left:566px;top:575px;width:24px;height:1px;background:#999;"></div>
<div class="a" style="left:592px;top:553px;width:28px;height:23px;background:#4a5a64;"></div>
<svg class="a" style="left:599px;top:557px;" width="14" height="14" viewBox="0 0 14 14"><rect x="4" y="0.5" width="9.5" height="13" fill="#2a5699"/><rect x="4" y="0.5" width="9.5" height="4" fill="#41a5ee"/><rect x="4" y="4.5" width="9.5" height="4.5" fill="#2b7cd3"/><rect x="0.5" y="3" width="8" height="8" fill="#185abd"/><text x="1.2" y="9.5" font-size="6.5" font-family="Liberation Sans" font-weight="bold" fill="#fff">W</text></svg>
<div class="a" style="left:592px;top:575px;width:28px;height:1px;background:#aaa;"></div>
<svg class="a" style="left:627px;top:557px;" width="16" height="14" viewBox="0 0 16 14"><rect x="1" y="2" width="10" height="8" rx="1" fill="#23a5b8"/><path d="M11 4.5L15 2.5V9.5L11 7.5Z" fill="#23a5b8"/><circle cx="6" cy="6" r="2.4" fill="#e8432f"/><path d="M4 10V13M8 10V13M2.5 13H9.5" stroke="#23a5b8" stroke-width="1"/></svg>
<div class="a" style="left:623px;top:575px;width:23px;height:1px;background:#999;"></div>
<svg class="a" style="left:710px;top:561px;" width="8" height="5" viewBox="0 0 8 5"><path d="M0.8 4.2L4 1L7.2 4.2" fill="none" stroke="#b8b8b8" stroke-width="1"/></svg>
<svg class="a" style="left:728px;top:558px;" width="10" height="12" viewBox="0 0 10 12"><rect x="1.5" y="3" width="5" height="7" rx="0.5" fill="none" stroke="#b8b8b8" stroke-width="0.9"/><path d="M3 1V3M5 1V3M7 6.5H9.5" stroke="#b8b8b8" stroke-width="0.9"/></svg>
<svg class="a" style="left:744px;top:559px;" width="11" height="9" viewBox="0 0 11 9"><rect x="0.5" y="2" width="10" height="6.5" fill="#b0b0b0"/><rect x="0.5" y="0.5" width="4" height="2" fill="#b0b0b0"/><rect x="5.5" y="4" width="4" height="3" fill="#888"/></svg>
<svg class="a" style="left:764px;top:560px;" width="11" height="7" viewBox="0 0 11 7"><path d="M2.5 6.5A2 2 0 0 1 2.5 2.8A3 3 0 0 1 8 2.5A2 2 0 0 1 8.5 6.5Z" fill="#a8a8a8"/></svg>
<svg class="a" style="left:780px;top:559px;" width="10" height="10" viewBox="0 0 10 10"><path d="M0.5 3.5H2.5L5 1V9L2.5 6.5H0.5Z" fill="none" stroke="#b8b8b8" stroke-width="0.9"/><path d="M6.5 3Q8 5 6.5 7M8 1.8Q10.2 5 8 8.2" fill="none" stroke="#b8b8b8" stroke-width="0.8"/></svg>
<svg class="a" style="left:800px;top:559px;" width="11" height="10" viewBox="0 0 11 10"><rect x="0.5" y="0.5" width="10" height="6.5" fill="none" stroke="#b8b8b8" stroke-width="0.9"/><path d="M3.5 9.5H7.5M5.5 7V9.5" stroke="#b8b8b8" stroke-width="0.9"/></svg>
<svg class="a" style="left:821px;top:558px;" width="10" height="12" viewBox="0 0 10 12"><path d="M1 11L3 7L7 1.5L9 3L5 8.5L1 11Z" fill="none" stroke="#b8b8b8" stroke-width="0.9"/><circle cx="2.5" cy="9" r="1.5" fill="#b8b8b8"/></svg>
<div class="t" id="t74" style="left:839px;top:560.50px;font-size:8px;height:8px;line-height:8px;color:#b8b8b8;font-weight:normal;font-family:'Liberation Sans',sans-serif;">あ</div>
<svg class="a" style="left:854px;top:559px;" width="11" height="11" viewBox="0 0 11 11"><circle cx="5" cy="5" r="4.5" fill="#1e5fbf"/><circle cx="8.3" cy="8" r="2" fill="#e04b3a"/></svg>
<div class="t" id="t75" style="left:884px;top:556.25px;font-size:7.5px;height:7.5px;line-height:7.5px;color:#b8b8b8;font-weight:normal;font-family:'Liberation Sans',sans-serif;transform:scaleX(1.3005);">6:39</div>
<div class="t" id="t76" style="left:873px;top:566.75px;font-size:7.5px;height:7.5px;line-height:7.5px;color:#b8b8b8;font-weight:normal;font-family:'Liberation Sans',sans-serif;transform:scaleX(0.9588);">2021/01/23</div>
<svg class="a" style="left:919px;top:559px;" width="11" height="11" viewBox="0 0 11 11"><path d="M0.5 0.5H10.5V8H6L3.5 10.5V8H0.5Z" fill="#b0b0b0"/><path d="M2.5 3H8.5M2.5 5H8.5" stroke="#555" stroke-width="0.7"/></svg>
<div class="a" style="left:941px;top:553px;width:1px;height:23px;background:#5a6a74;"></div>
<div class="a" style="left:0;top:0;width:1024px;height:576px;background:linear-gradient(to bottom,rgba(0,0,0,0) 468px,rgba(0,0,0,0.09) 480px,rgba(0,0,0,0.28) 500px,rgba(0,0,0,0.40) 517px,rgba(0,0,0,0.52) 538px,rgba(0,0,0,0.58) 553px,rgba(0,0,0,0.62) 576px)"></div>
<div class="a" style="left:13px;top:516px;width:998px;height:1px;background:rgba(255,255,255,0.13);"></div>
<div class="a" style="left:13px;top:515.5px;width:356px;height:2px;background:#5ab4e6;"></div>
<svg class="a" style="left:367px;top:510px;" width="14" height="14" viewBox="0 0 14 14"><circle cx="7" cy="6.5" r="4.8" fill="none" stroke="#5ab4e6" stroke-width="1.6"/></svg>
<div class="t" id="t77" style="left:13px;top:525.00px;font-size:7px;height:7px;line-height:7px;color:#fff;font-weight:normal;font-family:'Liberation Sans',sans-serif;transform:scaleX(0.8562);">0:01:46</div>
<div class="t" id="t78" style="left:991px;top:525.00px;font-size:7px;height:7px;line-height:7px;color:#fff;font-weight:normal;font-family:'Liberation Sans',sans-serif;transform:scaleX(0.8562);">0:03:10</div>
<svg class="a" style="left:20px;top:540px;" width="14" height="13" viewBox="0 0 14 13"><path d="M1 4.5H2.8L5.6 2V11L2.8 8.5H1Z" fill="none" stroke="#ddd" stroke-width="0.9"/><path d="M7.8 5Q8.8 6.5 7.8 8M9.6 3.8Q11.2 6.5 9.6 9.2M11.2 2.3Q13.6 6.5 11.2 10.7" fill="none" stroke="#ddd" stroke-width="0.9"/></svg>
<svg class="a" style="left:46px;top:540px;" width="13" height="13" viewBox="0 0 13 13"><rect x="1.8" y="2.3" width="10" height="6.8" fill="none" stroke="#ddd" stroke-width="1"/><rect x="2.3" y="5.6" width="9" height="3" fill="#8a8a8a"/><path d="M3 9.2L3.6 11.4L5.4 9.2" fill="#ddd" stroke="#ddd" stroke-width="0.6"/></svg>
<svg class="a" style="left:479px;top:540px;" width="14" height="14" viewBox="0 0 14 14"><path d="M2.6 4.6A5.2 4.2 0 0 1 12.2 6" fill="none" stroke="#e0e0e0" stroke-width="1"/><path d="M0.6 3.6L4.2 3.4L2.2 6.6Z" fill="#e0e0e0"/></svg>
<div class="t" id="t79" style="left:482px;top:546.75px;font-size:6.5px;height:6.5px;line-height:6.5px;color:#e0e0e0;font-weight:normal;font-family:'Liberation Sans',sans-serif;transform:scaleX(1.0367);-webkit-text-stroke:0">10</div>
<svg class="a" style="left:508px;top:541px;" width="10" height="12" viewBox="0 0 10 12"><path d="M1.6 1.6L8 6.2L1.6 10.8Z" fill="none" stroke="#e0e0e0" stroke-width="1"/></svg>
<svg class="a" style="left:532px;top:540px;" width="14" height="14" viewBox="0 0 14 14"><path d="M1.8 6A5.2 4.2 0 0 1 11.4 4.6" fill="none" stroke="#e0e0e0" stroke-width="1"/><path d="M13.4 3.6L9.8 3.4L11.8 6.6Z" fill="#e0e0e0"/></svg>
<div class="t" id="t80" style="left:535px;top:546.75px;font-size:6.5px;height:6.5px;line-height:6.5px;color:#e0e0e0;font-weight:normal;font-family:'Liberation Sans',sans-serif;transform:scaleX(1.0367);-webkit-text-stroke:0">30</div>
<svg class="a" style="left:912px;top:540px;" width="13" height="13" viewBox="0 0 13 13"><path d="M1 12L2 8.5L9.5 1L12 3.5L4.5 11Z" fill="none" stroke="#fff" stroke-width="1.1"/><path d="M8 2.5L10.5 5" stroke="#fff" stroke-width="1"/></svg>
<svg class="a" style="left:939px;top:542px;" width="12" height="9" viewBox="0 0 12 9"><rect x="0.5" y="0.5" width="10.5" height="7.5" fill="none" stroke="#fff" stroke-width="1"/><rect x="4" y="3" width="6" height="4" fill="#fff"/></svg>
<svg class="a" style="left:965px;top:540px;" width="13" height="13" viewBox="0 0 13 13"><path d="M1.5 11.5L5.5 7.5M2 7.5H5.5V11M11.5 1.5L7.5 5.5M11 5.5H7.5V2" fill="none" stroke="#fff" stroke-width="1"/></svg>
<svg class="a" style="left:992px;top:545px;" width="12" height="3" viewBox="0 0 12 3"><g fill="#fff"><circle cx="1.5" cy="1.5" r="1"/><circle cx="6" cy="1.5" r="1"/><circle cx="10.5" cy="1.5" r="1"/></g></svg>
<svg class="a" style="left:8px;top:3px;" width="12" height="10" viewBox="0 0 12 10"><path d="M2.2 5H8.2M4.8 2.1L1.9 5L4.8 7.9" stroke="#d0d0d0" stroke-width="1.15" fill="none"/></svg>
<svg class="a" style="left:2px;top:280px;" width="10" height="16" viewBox="0 0 10 16"><path d="M9 1.8L2.8 8L9 14.2" stroke="#c8c8c8" stroke-width="1.1" fill="none"/></svg>
<script>(function(){var W={0:117.0,1:19.5,2:17.5,3:13.5,4:21.5,5:25.6,6:26.8,7:37.9,8:13.0,9:13.6,10:16.9,11:39.6,12:34.3,13:13.5,14:34.5,15:19.0,16:14.0,17:19.0,18:14.0,19:23.0,20:22.5,21:14.5,22:61.5,23:46.0,24:11.5,25:7.5,26:7.0,27:9.0,28:5.0,29:6.0,30:5.5,31:4.0,32:5.5,33:9.0,34:5.0,35:2.5,36:5.0,37:2.5,38:7.0,39:8.0,40:7.0,41:6.0,42:20.0,43:19.5,44:22.0,45:32.5,46:28.0,47:25.0,48:22.0,49:24.0,50:34.0,51:14.0,52:24.0,53:14.0,54:22.5,55:14.0,56:23.0,57:28.0,58:13.0,59:13.0,60:13.0,61:32.5,62:19.0,63:24.0,64:74.0,65:47.0,66:79.6,67:63.2,68:31.0,69:32.0,70:20.0,71:27.0,72:15.0,73:66.0,74:8.0,75:19.0,76:36.0,77:20.0,78:20.0,79:7.5,80:7.5};for(var k in W){var e=document.getElementById("t"+k);if(!e)continue;e.style.transform="none";var w=e.getBoundingClientRect().width;if(w>0)e.style.transform="scaleX("+(W[k]/w).toFixed(4)+")";}})();</script>
</body></html>
